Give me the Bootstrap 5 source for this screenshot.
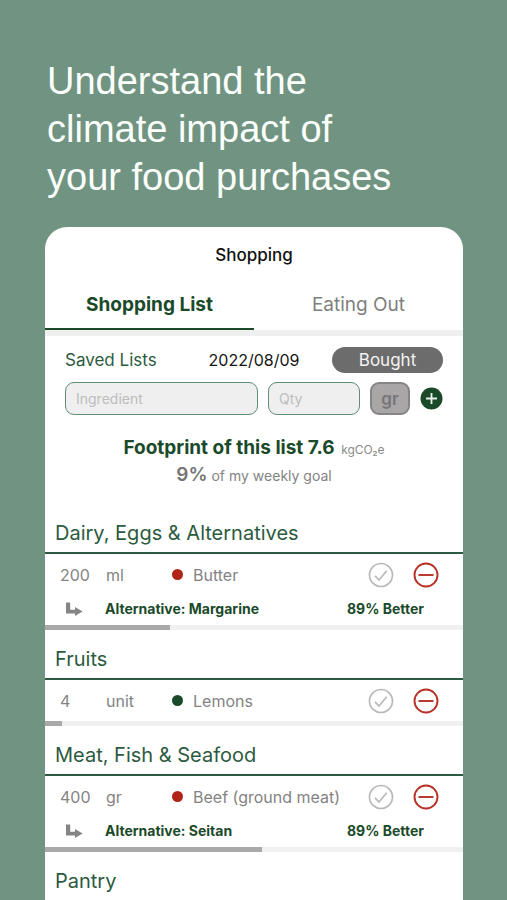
<!DOCTYPE html>
<html lang="en">
<head>
<meta charset="utf-8">
<meta name="viewport" content="width=device-width, initial-scale=1">
<title>Shopping</title>
<link href="https://cdn.jsdelivr.net/npm/bootstrap@5.3.0/dist/css/bootstrap.min.css" rel="stylesheet">
<style>
:root { --forest: #1a4a29; --pine: #2c5a40; --ash: #838383; --brick: #b02318; }
body { background: #709481; font-family: Inter, "Liberation Sans", sans-serif; font-size: 16px; line-height: 24px; color: var(--ash); }
.page { padding: 57px 44px 0 45px; }
.headline { font-family: "Liberation Sans", Arial, sans-serif; font-size: 38px; line-height: 48px; font-weight: 400; color: #fbfffc; padding-left: 2px; margin-bottom: 26px; }
.panel { border-radius: 22px 22px 0 0; }
.screen-title { font-size: 17px; line-height: 24px; font-weight: 500; color: #111; padding: 16px 0; }
.tab { height: 47px; padding: 0 0 2px; font-size: 19px; color: #808080; border: 0; border-bottom: 2px solid transparent; border-radius: 0; background: none; }
.tab.active { color: var(--forest); font-weight: 700; border-bottom-color: var(--forest); }
.divider { height: 6px; background: #efefef; }
.entry { padding: 11px 20px 0; }
.saved { font-size: 17px; line-height: 26px; color: var(--pine); }
.date { font-size: 16px; line-height: 26px; color: #151515; }
.bought { width: 111px; height: 26px; font-size: 17px; line-height: 26px; color: #f4f4f4; background: #6c6c6c; }
.field { height: 33px; padding: 0 10px; font-size: 14px; border: 1px solid #5f8d75; border-radius: 9px; background: #efefef; }
.field::placeholder { color: #bdbdbd; }
.qty { flex: 0 0 92px; width: 92px; }
.unit-btn { flex: 0 0 40px; height: 33px; font-size: 17px; font-weight: 600; color: #777; background: #a8a6a7; border: 2px solid #858585; border-radius: 9px; }
.bar-gap { gap: 10px; margin-top: 9px; }
.footprint { padding: 20px 0 16px; }
.total { font-size: 19px; line-height: 26px; font-weight: 700; color: var(--forest); }
.total small { font-size: 12px; font-weight: 400; color: #8a8a8a; margin-left: 2px; }
.goal { font-size: 14px; line-height: 24px; }
.goal b { font-size: 19px; font-weight: 600; color: #757575; }
.group-title { font-size: 20px; line-height: 34px; font-weight: 400; color: var(--pine); padding: 12px 10px 2px; }
.items { border-top: 2px solid var(--pine); }
.item-row { height: 41px; padding: 0 24px 0 15px; }
.amount { width: 46px; }
.measure { width: 66px; }
.dot { width: 11px; height: 11px; margin-right: 10px; background: var(--brick); }
.dot.good { background: var(--forest); }
.icon-pair { gap: 19px; }
.alt-row { height: 30px; padding: 0 39px 2px 20px; font-size: 14px; font-weight: 700; color: var(--forest); }
.alt-icon { width: 40px; }
.track { --bs-progress-height: 5px; --bs-progress-bg: #f0f0f0; --bs-progress-bar-bg: #a9a9a9; --bs-progress-border-radius: 0; }
svg { display: block; }
</style>
<script src="https://cdn.jsdelivr.net/npm/bootstrap@5.3.0/dist/js/bootstrap.bundle.min.js" defer></script>
</head>
<body>
<svg class="d-none" aria-hidden="true">
  <symbol id="check" viewBox="0 0 26 26"><g fill="none" stroke="#b9b9b9" stroke-width="1.7"><circle cx="13" cy="13" r="11.5"/><path d="M7 13.8l4 4.2 7.7-9.2"/></g></symbol>
  <symbol id="remove" viewBox="0 0 26 26"><g fill="none" stroke="#b83026" stroke-width="1.9"><circle cx="13" cy="13" r="11.5"/><path d="M5.5 13h15"/></g></symbol>
  <symbol id="turn" viewBox="0 0 18 14"><path d="M1 .5h4.2v7.2H10V5L17.6 9.5 10 14v-2.4H1z" fill="#858585"/></symbol>
</svg>
<div class="page min-vh-100 d-flex flex-column">
  <h1 class="headline">Understand the<br>climate impact of<br>your food purchases</h1>
  <main class="panel bg-white flex-grow-1">
    <h2 class="screen-title text-center mb-0">Shopping</h2>
    <div class="d-flex" role="tablist">
      <button type="button" class="tab active flex-fill w-50" role="tab" aria-selected="true">Shopping List</button>
      <button type="button" class="tab flex-fill w-50" role="tab" aria-selected="false">Eating Out</button>
    </div>
    <div class="divider"></div>

    <form class="entry">
      <div class="row g-0 align-items-center">
        <div class="col"><a href="#" class="saved text-decoration-none">Saved Lists</a></div>
        <div class="col-auto date">2022/08/09</div>
        <div class="col d-flex justify-content-end"><button type="button" class="bought btn rounded-pill border-0 p-0">Bought</button></div>
      </div>
      <div class="bar-gap d-flex align-items-center">
        <input type="text" class="field form-control" placeholder="Ingredient" aria-label="Ingredient">
        <input type="text" class="field qty form-control" placeholder="Qty" aria-label="Quantity">
        <button type="button" class="unit-btn p-0">gr</button>
        <button type="button" class="btn p-0 border-0" aria-label="Add ingredient">
          <svg width="23" height="23" viewBox="0 0 23 23"><circle cx="11.5" cy="11.5" r="11" fill="#1a4a29"/><path d="M11.5 6v11M6 11.5h11" stroke="#e8f2e8" stroke-width="1.8"/></svg>
        </button>
      </div>
    </form>

    <div class="footprint text-center">
      <div class="total">Footprint of this list 7.6 <small>kgCO₂e</small></div>
      <div class="goal"><b>9%</b> of my weekly goal</div>
    </div>

    <section>
      <h3 class="group-title mb-0">Dairy, Eggs &amp; Alternatives</h3>
      <div class="items">
        <div class="item-row d-flex align-items-center">
          <span class="amount">200</span><span class="measure">ml</span><span class="dot rounded-circle"></span><span class="flex-grow-1">Butter</span>
          <div class="icon-pair d-flex">
            <button type="button" class="btn p-0 border-0" aria-label="Mark Butter done"><svg width="26" height="26"><use href="#check"/></svg></button>
            <button type="button" class="btn p-0 border-0" aria-label="Remove Butter"><svg width="26" height="26"><use href="#remove"/></svg></button>
          </div>
        </div>
        <div class="alt-row d-flex align-items-center">
          <span class="alt-icon"><svg width="18" height="14"><use href="#turn"/></svg></span><span class="flex-grow-1">Alternative: Margarine</span><span>89% Better</span>
        </div>
        <div class="track progress" role="progressbar" aria-label="Dairy share" aria-valuenow="30" aria-valuemin="0" aria-valuemax="100"><div class="progress-bar" style="width:30%"></div></div>
      </div>
    </section>

    <section>
      <h3 class="group-title mb-0">Fruits</h3>
      <div class="items">
        <div class="item-row d-flex align-items-center">
          <span class="amount">4</span><span class="measure">unit</span><span class="dot good rounded-circle"></span><span class="flex-grow-1">Lemons</span>
          <div class="icon-pair d-flex">
            <button type="button" class="btn p-0 border-0" aria-label="Mark Lemons done"><svg width="26" height="26"><use href="#check"/></svg></button>
            <button type="button" class="btn p-0 border-0" aria-label="Remove Lemons"><svg width="26" height="26"><use href="#remove"/></svg></button>
          </div>
        </div>
        <div class="track progress" role="progressbar" aria-label="Fruits share" aria-valuenow="4" aria-valuemin="0" aria-valuemax="100"><div class="progress-bar" style="width:4%"></div></div>
      </div>
    </section>

    <section>
      <h3 class="group-title mb-0">Meat, Fish &amp; Seafood</h3>
      <div class="items">
        <div class="item-row d-flex align-items-center">
          <span class="amount">400</span><span class="measure">gr</span><span class="dot rounded-circle"></span><span class="flex-grow-1">Beef (ground meat)</span>
          <div class="icon-pair d-flex">
            <button type="button" class="btn p-0 border-0" aria-label="Mark Beef done"><svg width="26" height="26"><use href="#check"/></svg></button>
            <button type="button" class="btn p-0 border-0" aria-label="Remove Beef"><svg width="26" height="26"><use href="#remove"/></svg></button>
          </div>
        </div>
        <div class="alt-row d-flex align-items-center">
          <span class="alt-icon"><svg width="18" height="14"><use href="#turn"/></svg></span><span class="flex-grow-1">Alternative: Seitan</span><span>89% Better</span>
        </div>
        <div class="track progress" role="progressbar" aria-label="Meat share" aria-valuenow="52" aria-valuemin="0" aria-valuemax="100"><div class="progress-bar" style="width:52%"></div></div>
      </div>
    </section>

    <section>
      <h3 class="group-title mb-0">Pantry</h3>
    </section>
  </main>
</div>
</body>
</html>
